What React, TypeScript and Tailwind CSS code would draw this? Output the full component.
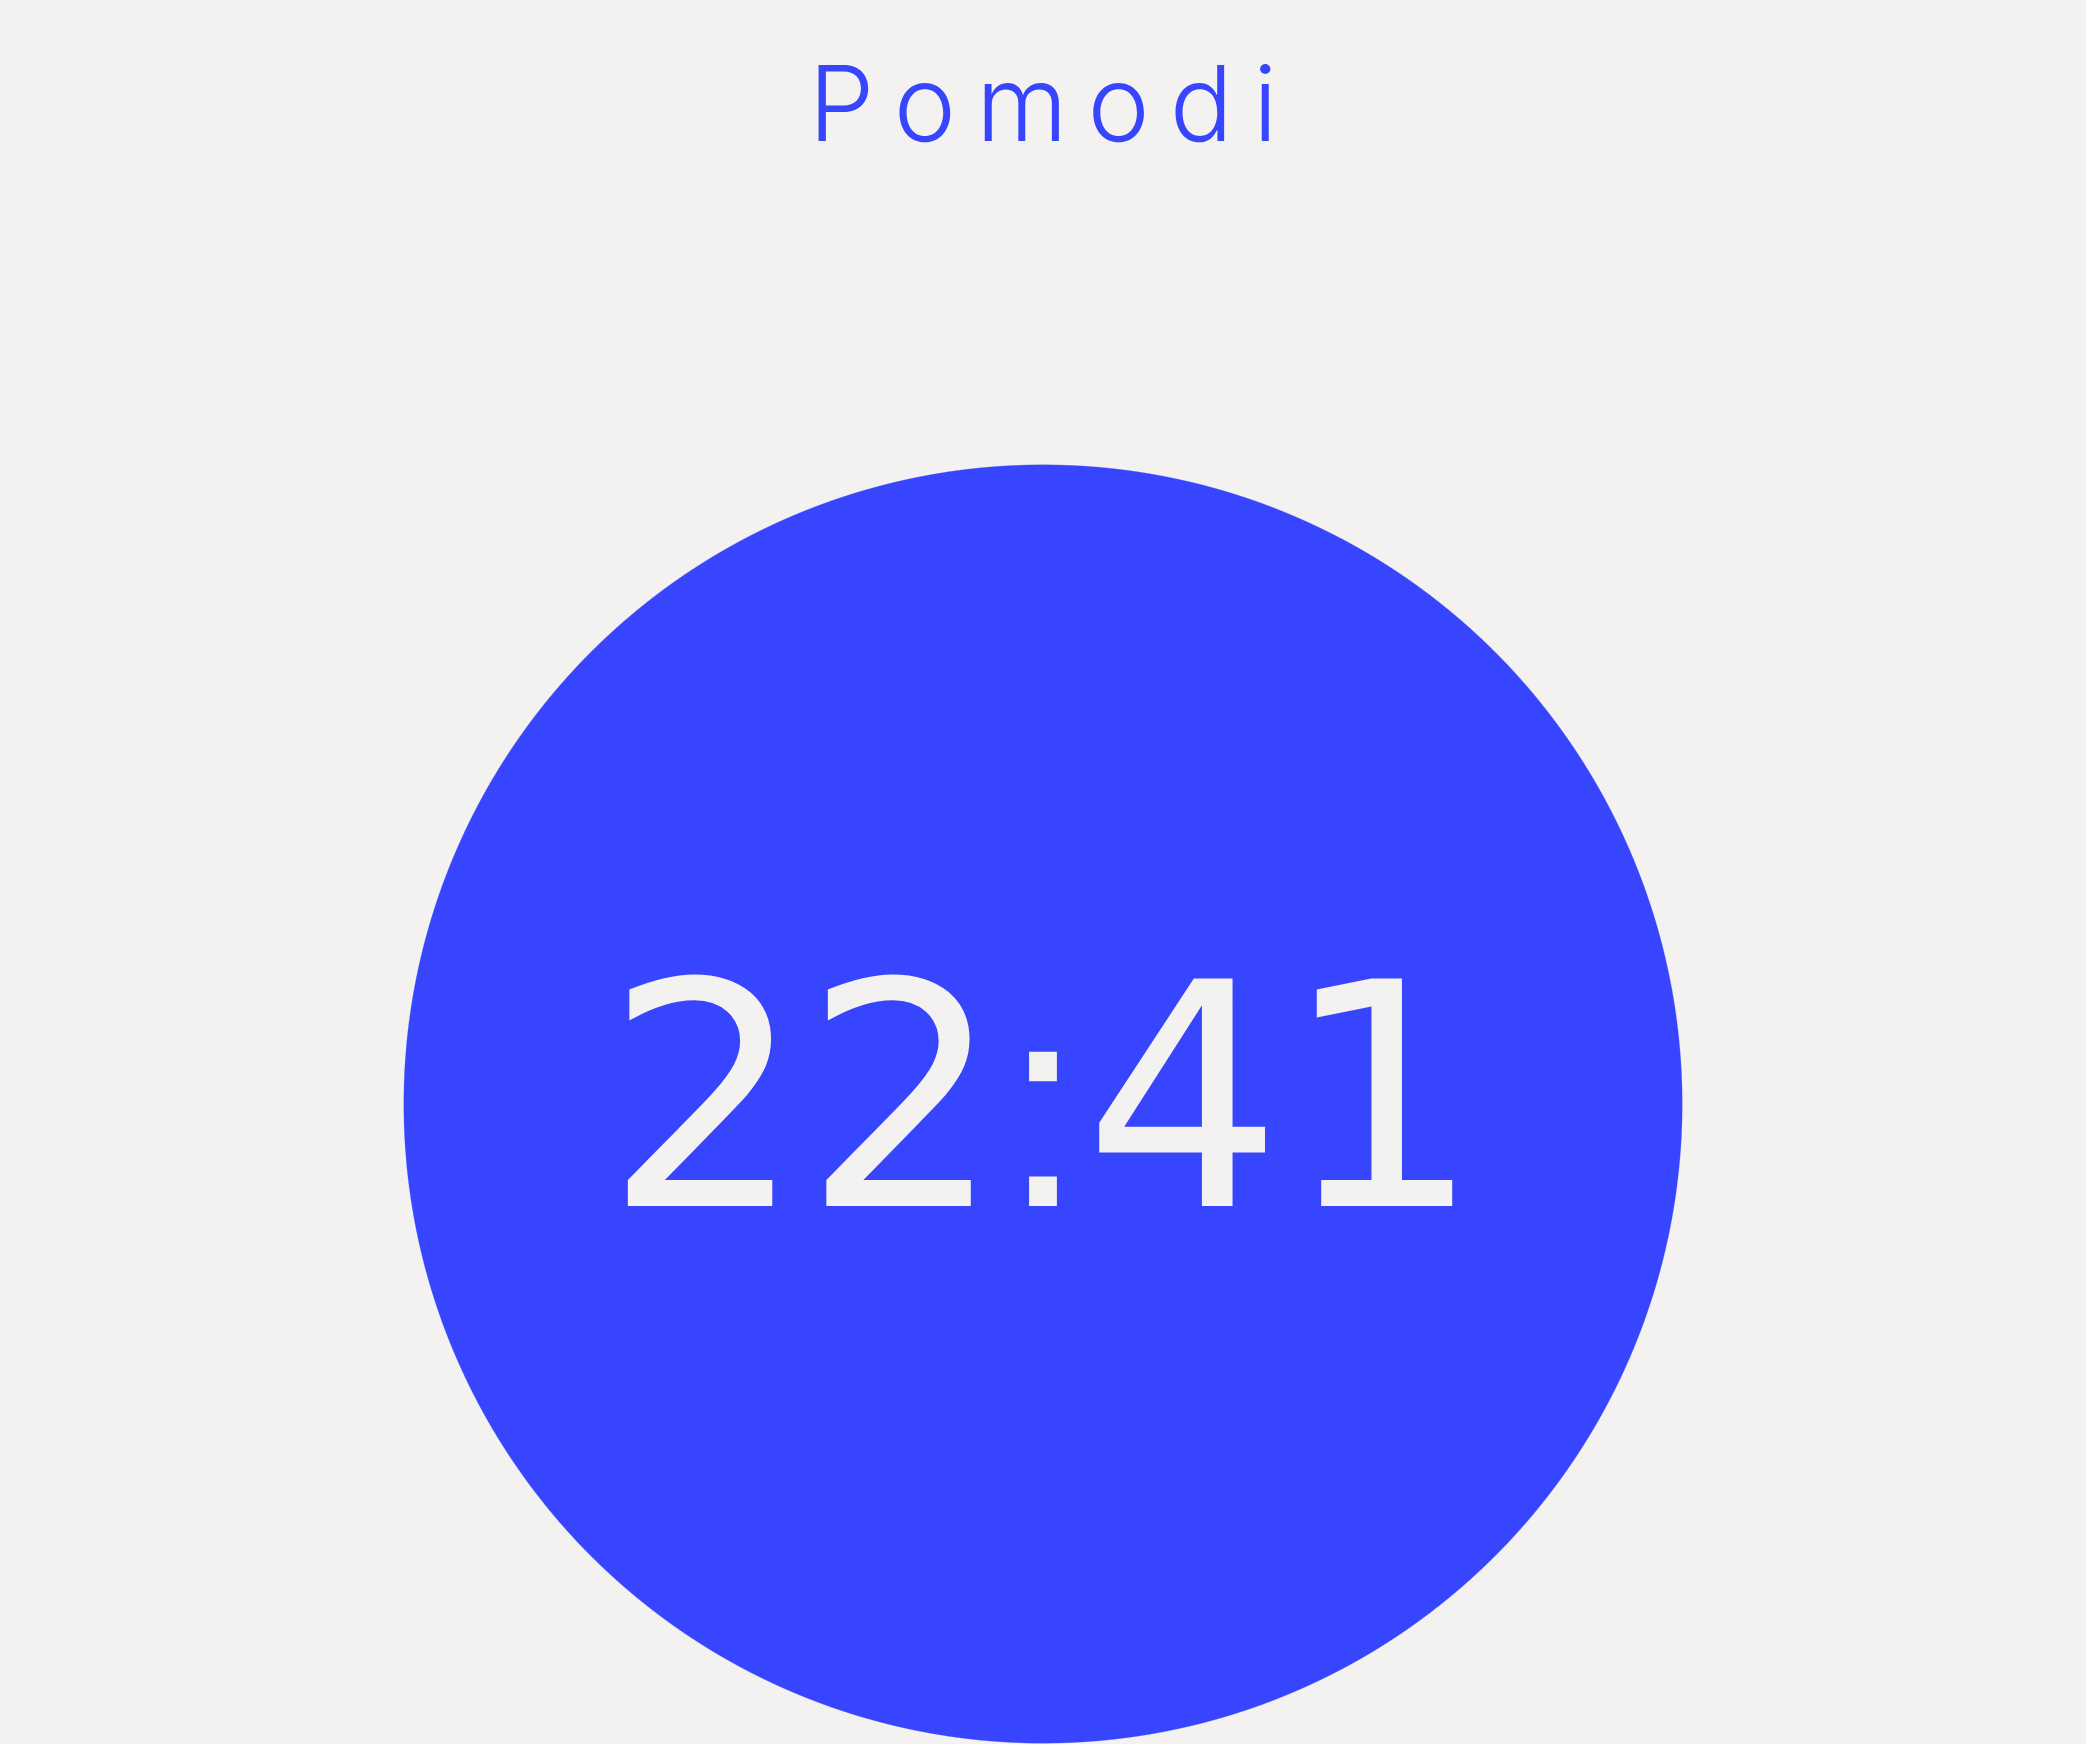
export default function App() {
  const time = { min: "22", sec: "41" }

  return (
    <main className="flex min-h-screen flex-col items-center overflow-hidden bg-[#f3f2f0] pt-[50px]">
      <h1 className="pl-[20px] font-['Inter',sans-serif] text-[105px] font-light leading-none tracking-[20px] text-[#3745ff]">
        Pomodi
      </h1>

      {/* таймер — большой круг, низ упирается в край окна */}
      <div className="mt-[309px] flex h-[1280px] w-[1280px] shrink-0 items-center justify-center rounded-full bg-[radial-gradient(circle_closest-side,#3745ff_99.8%,transparent_100%)]">
        <div className="mb-[12px] flex items-baseline font-['DejaVu_Sans',sans-serif] text-[312px] leading-none tabular-nums text-[#f3f2f0]">
          <span>{time.min}</span>
          <span className="inline-flex w-[82px] justify-center font-['Liberation_Sans',sans-serif] text-[292px]">:</span>
          <span>{time.sec}</span>
        </div>
      </div>
    </main>
  )
}
